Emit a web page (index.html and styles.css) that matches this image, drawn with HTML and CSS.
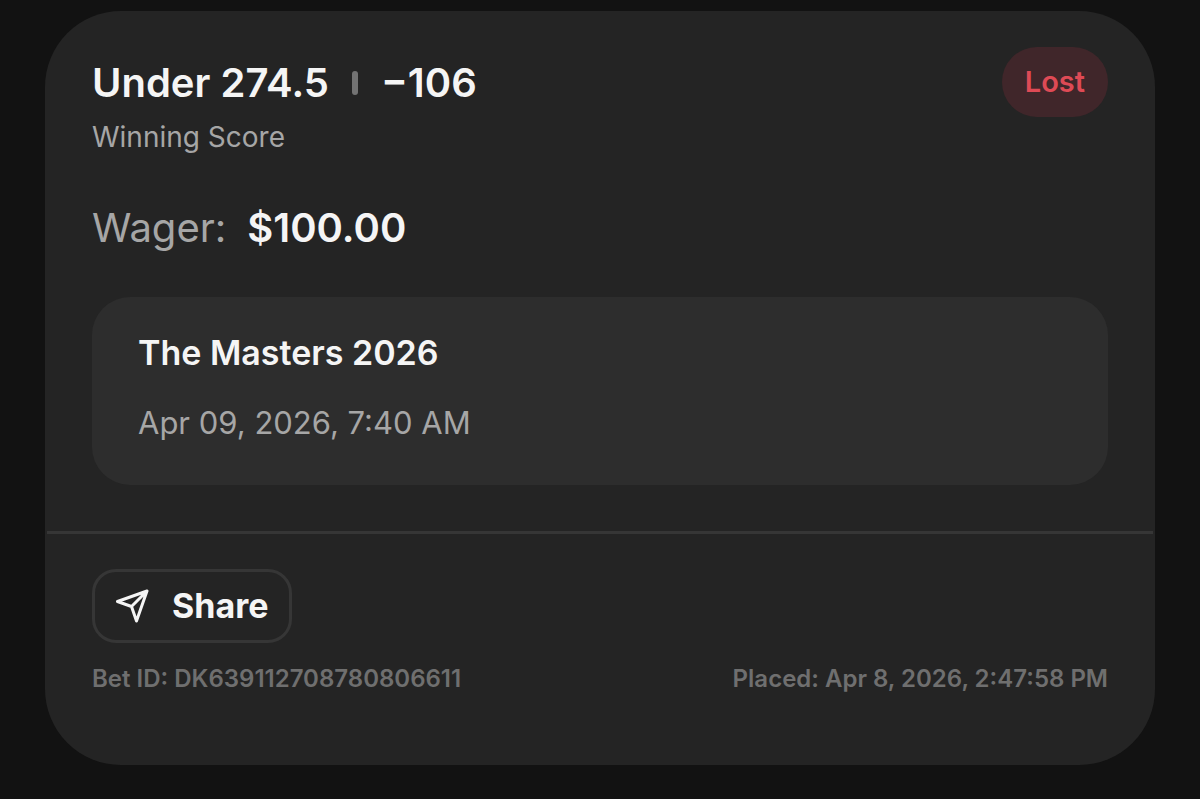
FILE: index.html
```html
<!DOCTYPE html>
<html lang="en">
<head>
<meta charset="utf-8">
<meta name="viewport" content="width=device-width, initial-scale=1">
<title>Bet details</title>
<link rel="stylesheet" href="styles.css">
</head>
<body>
<main class="card">
  <section class="bet">
    <header class="bet-header">
      <div>
        <h1 class="selection"><span>Under 274.5</span><span class="divider"></span><span>−106</span></h1>
        <p class="market">Winning Score</p>
      </div>
      <span class="status">Lost</span>
    </header>
    <p class="wager"><span class="wager-label">Wager:</span><strong class="wager-amount">$100.00</strong></p>
    <section class="event">
      <h2 class="event-name">The Masters 2026</h2>
      <p class="event-time">Apr 09, 2026, 7:40 AM</p>
    </section>
  </section>
  <footer class="footer">
    <button class="share" type="button">
      <svg class="share-icon" viewBox="0 0 34 34" aria-hidden="true"><path d="M1.500 12.500 31 2 20.500 32 15.500 17.500Z M15.500 17.500 31 2"/></svg>
      <span>Share</span>
    </button>
    <div class="meta"><span>Bet ID: DK639112708780806611</span><span>Placed: Apr 8, 2026, 2:47:58 PM</span></div>
  </footer>
</main>
</body>
</html>
```
FILE: styles.css
```css
* { box-sizing: border-box; }
body {
  margin: 0;
  padding: 11px 45px 34px;
  background: #121212;
  color: #f5f5f5;
  font-family: Inter, "Liberation Sans", sans-serif;
}
h1, h2, p { margin: 0; }
.card {
  background: #242424;
  border-radius: 76px;
  padding: 0 2px 70px;
}
.bet { padding: 36px 45px 46px; }
.bet-header { display: flex; justify-content: space-between; align-items: flex-start; }
.selection {
  display: flex;
  align-items: center;
  margin-top: 12px;
  font-size: 40px;
  line-height: 48px;
  font-weight: 600;
}
.divider { width: 6px; height: 24px; margin: 0 23px; border-radius: 3px; background: #737373; }
.market { margin-top: 12px; font-size: 28px; line-height: 36px; color: #a6a6a6; }
.status {
  padding: 16px 23px;
  border-radius: 36px;
  background: #40262a;
  color: #de4a55;
  font-size: 29px;
  line-height: 38px;
  font-weight: 600;
}
.wager { display: flex; gap: 21px; margin-top: 47px; font-size: 40px; line-height: 52px; }
.wager-label { color: #a6a6a6; }
.wager-amount { font-weight: 600; }
.event { margin-top: 43px; padding: 32px 46px 38px; border-radius: 38px; background: #2d2d2d; }
.event-name { font-size: 34px; line-height: 48px; font-weight: 600; }
.event-time { margin-top: 22px; font-size: 31px; line-height: 48px; color: #a6a6a6; }
.footer { padding: 35px 45px 0; border-top: 3px solid #363636; }
.share {
  display: flex;
  align-items: center;
  gap: 22px;
  height: 74px;
  padding: 0 21px;
  border: 3px solid #363636;
  border-radius: 24px;
  background: transparent;
  color: #f5f5f5;
  font: 700 34px/48px Inter, "Liberation Sans", sans-serif;
}
.share-icon { width: 34px; height: 34px; fill: none; stroke: currentColor; stroke-width: 3; stroke-linejoin: round; stroke-linecap: round; }
.meta { display: flex; justify-content: space-between; margin-top: 20px; color: #6f6f6f; font-size: 24px; line-height: 32px; font-weight: 600; }
```
